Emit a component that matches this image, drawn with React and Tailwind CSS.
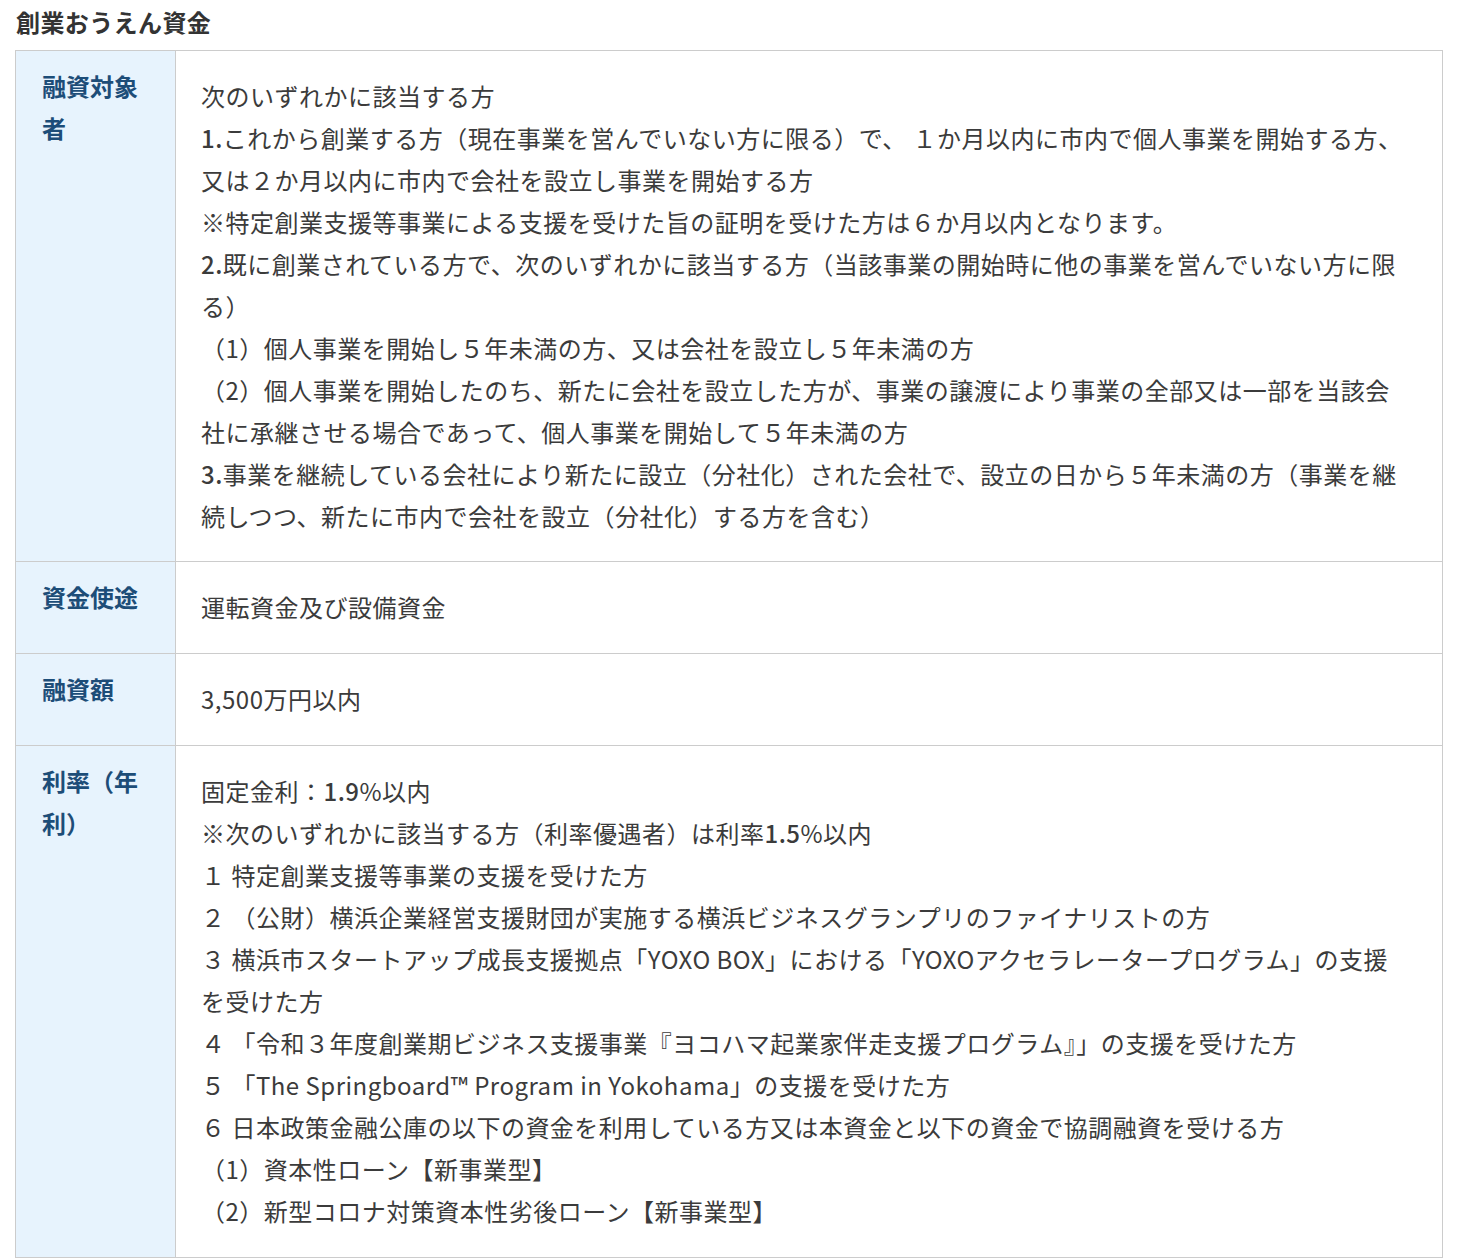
import React from 'react';

const rows = [
  {
    head: '融資対象者',
    lines: [
      '次のいずれかに該当する方',
      <><span className="font-medium">1.</span>これから創業する方（現在事業を営んでいない方に限る）で、 １か月以内に市内で個人事業を開始する方、</>,
      '又は２か月以内に市内で会社を設立し事業を開始する方',
      '※特定創業支援等事業による支援を受けた旨の証明を受けた方は６か月以内となります。',
      <><span className="font-medium">2.</span>既に創業されている方で、次のいずれかに該当する方（当該事業の開始時に他の事業を営んでいない方に限</>,
      'る）',
      '（1）個人事業を開始し５年未満の方、又は会社を設立し５年未満の方',
      '（2）個人事業を開始したのち、新たに会社を設立した方が、事業の譲渡により事業の全部又は一部を当該会',
      '社に承継させる場合であって、個人事業を開始して５年未満の方',
      <><span className="font-medium">3.</span>事業を継続している会社により新たに設立（分社化）された会社で、設立の日から５年未満の方（事業を継</>,
      '続しつつ、新たに市内で会社を設立（分社化）する方を含む）',
    ],
  },
  { head: '資金使途', lines: ['運転資金及び設備資金'] },
  { head: '融資額', lines: ['3,500万円以内'] },
  {
    head: '利率（年利）',
    lines: [
      <>固定金利：<span className="font-medium">1.9</span>%以内</>,
      <>※次のいずれかに該当する方（利率優遇者）は利率<span className="font-medium">1.5</span>%以内</>,
      '１ 特定創業支援等事業の支援を受けた方',
      '２ （公財）横浜企業経営支援財団が実施する横浜ビジネスグランプリのファイナリストの方',
      '３ 横浜市スタートアップ成長支援拠点「YOXO BOX」における「YOXOアクセラレータープログラム」の支援',
      'を受けた方',
      '４ 「令和３年度創業期ビジネス支援事業『ヨコハマ起業家伴走支援プログラム』」の支援を受けた方',
      '５ 「The Springboard™ Program in Yokohama」の支援を受けた方',
      '６ 日本政策金融公庫の以下の資金を利用している方又は本資金と以下の資金で協調融資を受ける方',
      '（1）資本性ローン【新事業型】',
      '（2）新型コロナ対策資本性劣後ローン【新事業型】',
    ],
  },
];

export default function App() {
  return (
    <div className="bg-white min-h-screen text-[#333] font-['Noto_Sans_CJK_JP','Noto_Sans',sans-serif]">
      <div className="pl-[16px] text-[24px] font-bold leading-[44px] h-[50px] tracking-[0.4px]">創業おうえん資金</div>

      <div className="ml-[15px] w-[1428px] border border-[#cccccc]">
        {rows.map((row, i) => (
          <div key={i} className={`flex ${i > 0 ? 'border-t border-[#cccccc]' : ''}`}>
            <div className="w-[160px] shrink-0 bg-[#e7f3fd] border-r border-[#cccccc] pl-[26px] pr-[24px] pt-[14px] text-[24px] font-bold leading-[42px] text-[#1d4d78]">
              {row.head}
            </div>
            <div
              className={`flex-1 px-[25px] pt-[24px] ${i > 0 ? 'pb-[25px]' : 'pb-[24px]'} text-[24px] leading-[42px] tracking-[0.5px] text-[#3b3b3b] whitespace-pre`}
            >
              {row.lines.map((line, j) => (
                <div key={j}>{line}</div>
              ))}
            </div>
          </div>
        ))}
      </div>
    </div>
  );
}
